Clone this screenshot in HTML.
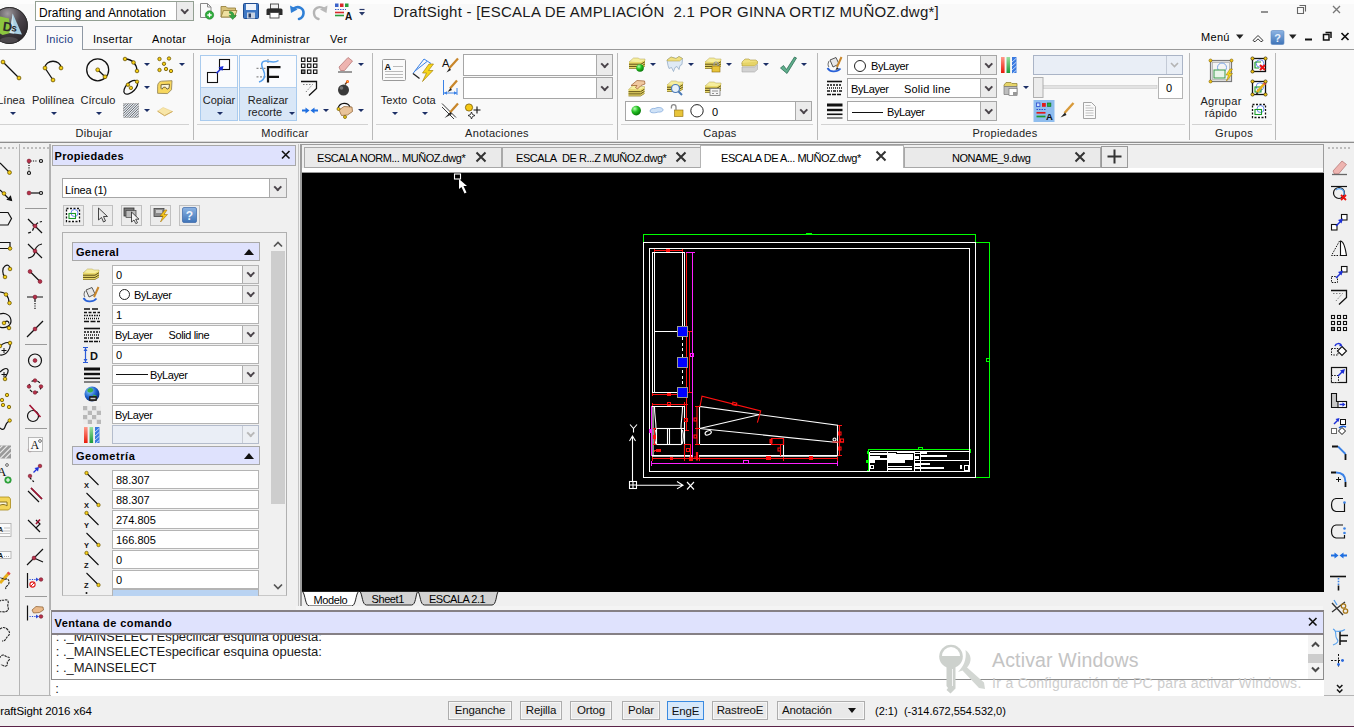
<!DOCTYPE html>
<html><head><meta charset="utf-8"><title>DraftSight</title>
<style>
*{box-sizing:border-box;margin:0;padding:0}
html,body{width:1354px;height:727px;overflow:hidden}
body{position:relative;background:#f4f4f4;font-family:"Liberation Sans",sans-serif;font-size:12px;color:#000}
.a{position:absolute}
.t{position:absolute;white-space:nowrap;line-height:1}
svg{position:absolute;overflow:visible}
.combo{position:absolute;background:#fff;border:1px solid #a6a6a6}
.combo .dd{position:absolute;right:0;top:0;bottom:0;width:16px;background:#ebebeb;border-left:1px solid #aaa}
.combo .dd:after{content:"";position:absolute;left:50%;top:50%;margin-left:-2.750px;margin-top:-4.500px;width:3.500px;height:3.500px;border-right:2px solid #4a444a;border-bottom:2px solid #4a444a;transform:rotate(45deg)}
.vsep{position:absolute;width:1px;background:#b9b9b9}
.hsep{position:absolute;height:1px;background:#d2d2d2}
.gl{position:absolute;font-size:11px;line-height:1;white-space:nowrap;letter-spacing:.3px;color:#222;transform:translateX(-50%)}
.tri{position:absolute;width:0;height:0;margin-top:-.5px;border-left:3px solid transparent;border-right:3px solid transparent;border-top:3.400px solid #1c2f66}
.mt{font-size:11px;letter-spacing:.3px}
.rl{position:absolute;font-size:11px;line-height:1;white-space:nowrap;letter-spacing:0;color:#222;transform:translateX(-50%)}
.f{position:absolute;left:112px;width:147px;height:19px;background:#fff;border:1px solid #b4b4b4;font-size:11px;line-height:19px;padding-left:3px;white-space:nowrap}
.f .dd,.fc .dd{position:absolute;right:0;top:0;bottom:0;width:16px;background:#ebebeb;border-left:1px solid #aaa}
.f .dd:after{content:"";position:absolute;left:50%;top:50%;margin-left:-2.750px;margin-top:-4.500px;width:3.500px;height:3.500px;border-right:2px solid #4a444a;border-bottom:2px solid #4a444a;transform:rotate(45deg)}
.sb{position:absolute;top:701px;height:19px;border:1px solid #adadad;background:#e9e9e9;box-shadow:inset 0 0 0 1px #f6f6f6;font-size:11.500px;line-height:17px;text-align:center;letter-spacing:-.15px;color:#111}
.dtab{position:absolute;top:147px;height:21px;background:#eaeaea;border:1px solid #a8a8a8;font-size:11px}
.dtab .t{top:5px;font-size:11px;letter-spacing:-.45px}
.ls{letter-spacing:-.4px}
.f .dis:after{border-color:#b8b8b8}
.cl{font-size:13px;letter-spacing:-.03px;color:#1a1a1a}
.pb{top:205px;width:21px;height:21px;border:1px solid #c0c0c0;background:#ececec}
.ph{left:72px;width:188px;height:19px;background:#dfe2fd;border:1px solid #a8a8a8}
.ph i{position:absolute;right:5px;top:6px;width:0;height:0;border-left:5px solid transparent;border-right:5px solid transparent;border-bottom:6px solid #111}
</style></head><body>
<!-- ===== TITLE BAR ===== -->
<div class="a" style="left:0;top:0;width:1354px;height:50px;background:#f9f9f9"></div>
<div class="a" style="left:0;top:0;width:1354px;height:4px;background:#fdfdfd"></div>
<!-- logo -->
<svg style="left:0;top:0" width="30" height="46" viewBox="0 0 30 46">
 <defs><radialGradient id="lg" cx="45%" cy="18%" r="80%"><stop offset="0" stop-color="#a09ca0"/><stop offset=".45" stop-color="#4a444a"/><stop offset="1" stop-color="#2a262a"/></radialGradient></defs>
 <circle cx="9.400" cy="25.500" r="18.500" fill="url(#lg)"/>
 <circle cx="9.400" cy="25.500" r="18" fill="none" stroke="#2a2a2a" stroke-width="1"/>
 <path d="M-1 16.300l10 2.300 1.300 14.400-7.600 2-3.700-2z" fill="#8cc63f"/>
 <path d="M12.700 13.400l-3.100 19.600 12.400 1.400z" fill="#a9cfe2"/>
 <path d="M12.700 13.400l-3.100 19.600 4.500 .5z" fill="#cfe4ee"/>
 <text x="3" y="31" font-family="Liberation Sans,sans-serif" font-weight="bold" font-size="13" fill="#2b2b2b" transform="rotate(8 6 26)">D</text>
 <text x="11.500" y="31.500" font-family="Liberation Sans,sans-serif" font-weight="bold" font-size="10" fill="#2b2b2b" transform="rotate(8 14 28)">s</text>
 <ellipse cx="9" cy="40" rx="9" ry="3" fill="#6a666a" opacity=".5"/>
</svg>
<!-- workspace combo -->
<div class="combo" style="left:35px;top:1px;width:159px;height:20px;border-color:#93a093"><span class="t" style="left:3px;top:4.500px;font-size:12px;letter-spacing:.07px">Drafting and Annotation</span><div class="dd" style="width:17px"></div></div>
<!-- quick access icons -->
<svg style="left:199px;top:2px" width="170" height="20" viewBox="0 0 170 20">
 <!-- new -->
 <path d="M1.5 1.5h7l3.5 3.5v10.500h-10.500z" fill="#fafafa" stroke="#8a8a8a"/>
 <path d="M8.5 1.500v3.500h3.500" fill="none" stroke="#8a8a8a"/>
 <circle cx="10.500" cy="13" r="4.200" fill="#2fae3c" stroke="#1c7d29" stroke-width=".6"/>
 <path d="M8.300 13h4.400M10.500 10.800v4.400" stroke="#fff" stroke-width="1.300"/>
 <!-- open -->
 <path d="M22 4.500h5l1.500 1.500h8v9h-14.500z" fill="#d8c27a" stroke="#8f7a35" stroke-width=".8"/>
 <path d="M22 15l2.500-6.500h13.500l-2.500 6.500z" fill="#efe0a0" stroke="#8f7a35" stroke-width=".8"/>
 <path d="M30.500 9.500c3 0 4.500 1.500 4.500 4h2.300l-3.600 4-3.600-4h2.300c0-1.500-.7-2.300-1.900-2.300z" fill="#35a545" stroke="#1c7d29" stroke-width=".5"/>
 <!-- save -->
 <rect x="44.500" y="1.500" width="15" height="15" rx="1" fill="#3f78c4" stroke="#1f4b8e"/>
 <rect x="47" y="2" width="10" height="6" fill="#eef3fb"/>
 <rect x="48" y="10.500" width="8" height="6" fill="#c9d3e2"/>
 <rect x="49.500" y="11.500" width="2.500" height="4" fill="#2b3f66"/>
 <!-- print -->
 <rect x="71.500" y="2" width="8" height="5" fill="#f4f4f4" stroke="#444" stroke-width=".9"/>
 <path d="M69 6.500h13a1.500 1.500 0 0 1 1.500 1.500v5h-16v-5a1.500 1.500 0 0 1 1.500-1.500z" fill="#2b2b2b"/>
 <rect x="71" y="10.500" width="9" height="5.500" fill="#fff" stroke="#444" stroke-width=".9"/>
 <!-- undo -->
 <path d="M94.500 6.500c5-3 10.500-.5 10 5-.3 3-2 4.800-4.500 5.500" fill="none" stroke="#2f7fd6" stroke-width="2.600" stroke-linecap="round"/>
 <path d="M91 3.500l1 7.500 6.500-3.500z" fill="#2f7fd6"/>
 <!-- redo -->
 <path d="M125 6.500c-5-3-10.500-.5-10 5 .3 3 2 4.800 4.500 5.500" fill="none" stroke="#b4b4b4" stroke-width="2.400" stroke-linecap="round"/>
 <path d="M128.500 3.500l-1 7.500-6.500-3.500z" fill="#b9b9b9"/>
 <!-- options -->
 <rect x="136" y="1.500" width="3.500" height="3.500" fill="#3a62c9"/><rect x="141" y="1.500" width="3.500" height="3.500" fill="#d82a2a"/><rect x="146" y="1.500" width="3.500" height="3.500" fill="#2a9d3a"/>
 <path d="M136 7.500h11" stroke="#3a62c9" stroke-width="1.200" stroke-dasharray="1.500 1"/>
 <path d="M136 10.500h9" stroke="#d82a2a" stroke-width="1.600"/>
 <path d="M136 13.500h9" stroke="#2a9d3a" stroke-width="1.600"/>
 <text x="146" y="17.500" font-family="Liberation Sans,sans-serif" font-weight="bold" font-size="10" fill="#111">A</text>
 <!-- customize arrow -->
 <path d="M160.500 7.500h5" stroke="#2a3a6a" stroke-width="1.200"/><path d="M160 10h6l-3 3.500z" fill="#2a3a6a"/>
</svg>
<div class="t" id="title" style="left:393px;top:3.600px;font-size:15px;letter-spacing:.24px;color:#1a1a1a">DraftSight - [ESCALA DE AMPLIACIÓN&nbsp; 2.1 POR GINNA ORTIZ MUÑOZ.dwg*]</div>
<!-- window controls -->
<svg style="left:1255px;top:0" width="99" height="20" viewBox="0 0 99 20">
 <path d="M6 12h7" stroke="#777" stroke-width="1.600"/>
 <path d="M44.500 5.500h6v6M42.500 7.500h6v6h-6z" fill="none" stroke="#666" stroke-width="1.100"/>
 <path d="M78 6l7 7M85 6l-7 7" stroke="#777" stroke-width="1.300"/>
</svg>

<!-- ===== MENU TABS ===== -->
<div class="a" style="left:0;top:49px;width:1354px;height:1px;background:#9a9a9a"></div>
<div class="a" style="left:35px;top:26px;width:48px;height:24px;background:#fafafa;border:1px solid #8e98a4;border-bottom:none"></div>
<div class="t mt" style="left:46px;top:34px;color:#1b3a82">Inicio</div>
<div class="t mt" style="left:93px;top:34px">Insertar</div>
<div class="t mt" style="left:152px;top:34px">Anotar</div>
<div class="t mt" style="left:207px;top:34px">Hoja</div>
<div class="t mt" style="left:251px;top:34px">Administrar</div>
<div class="t mt" style="left:330px;top:34px">Ver</div>
<div class="t mt" style="left:1201px;top:32px">Menú</div>
<svg style="left:1234px;top:28px" width="120" height="20" viewBox="0 0 120 20">
 <path d="M2 6.500h7.500l-3.750 4.500z" fill="#222"/>
 <path d="M19 12.500l5-5 5 5-2 1.300-3-3-3 3z" fill="#fff" stroke="#333" stroke-width="1"/>
 <defs><linearGradient id="hq" x1="0" y1="0" x2="0" y2="1"><stop offset="0" stop-color="#8db4e3"/><stop offset="1" stop-color="#3f74b8"/></linearGradient></defs>
 <rect x="37" y="2.500" width="13" height="14" rx="1.500" fill="url(#hq)" stroke="#5a86c0" stroke-width=".6"/>
 <text x="43.500" y="13.500" text-anchor="middle" font-family="Liberation Sans,sans-serif" font-weight="bold" font-size="11" fill="#e8f0fb">?</text>
 <path d="M55 6.500h7.500l-3.750 4.500z" fill="#222"/>
 <path d="M71 11.500h7" stroke="#111" stroke-width="2"/>
 <path d="M91.500 4.500h5.500v5.500M89.500 6.500h5.500v5.500h-5.500z" fill="none" stroke="#111" stroke-width="1.500"/>
 <path d="M107.500 5l7 7M114.500 5l-7 7" stroke="#111" stroke-width="1.700"/>
</svg>
<!-- ===== RIBBON ===== -->
<div id="ribbon" class="a" style="left:0;top:50px;width:1354px;height:91px;background:#f9f9f9"></div>
<div class="a" style="left:0;top:141px;width:1354px;height:1px;background:#d8d8d8"></div><div class="a" style="left:0;top:142px;width:1354px;height:1px;background:#8e8e8e"></div>
<!-- group separators -->
<div class="vsep" style="left:193px;top:53px;height:87px"></div>
<div class="vsep" style="left:372px;top:53px;height:87px"></div>
<div class="vsep" style="left:617px;top:53px;height:87px"></div>
<div class="vsep" style="left:817px;top:53px;height:87px"></div>
<div class="vsep" style="left:1189px;top:53px;height:87px"></div>
<div class="vsep" style="left:1275px;top:53px;height:87px"></div>
<div class="hsep" style="left:0;top:124px;width:189px"></div>
<div class="hsep" style="left:197px;top:124px;width:171px"></div>
<div class="hsep" style="left:376px;top:124px;width:237px"></div>
<div class="hsep" style="left:621px;top:124px;width:192px"></div>
<div class="hsep" style="left:821px;top:124px;width:364px"></div>
<div class="hsep" style="left:1192px;top:124px;width:80px"></div>
<div class="gl" style="left:94px;top:128px">Dibujar</div>
<div class="gl" style="left:285px;top:128px">Modificar</div>
<div class="gl" style="left:497px;top:128px">Anotaciones</div>
<div class="gl" style="left:720px;top:128px">Capas</div>
<div class="gl" style="left:1005px;top:128px">Propiedades</div>
<div class="gl" style="left:1234px;top:128px">Grupos</div>

<!-- == Dibujar == -->
<svg style="left:0;top:50px" width="193" height="74" viewBox="0 50 193 74">
 <g stroke="#111" stroke-width="1.300" fill="none">
  <path d="M3 62l16 16"/>
  <path d="M45 68c0-9 16-9 16 0M45 68l8 12"/>
  <circle cx="97.700" cy="69.800" r="11"/><path d="M97.700 69.800l7.300 7"/>
  <path d="M125 59c8 0 12 6 12 12"/>
  <ellipse cx="130.800" cy="87.300" rx="8.600" ry="4.600" transform="rotate(-45 130.800 87.300)"/>
 </g>
 <g fill="#f5cf16" stroke="#6b5400" stroke-width=".8">
  <circle cx="3" cy="62" r="1.900"/><circle cx="19" cy="78" r="1.900"/>
  <circle cx="45" cy="68" r="1.900"/><circle cx="61" cy="68" r="1.900"/><circle cx="53" cy="80" r="1.900"/>
  <circle cx="97.700" cy="69.800" r="1.900"/><circle cx="105" cy="76.800" r="1.900"/>
  <circle cx="125" cy="59" r="1.800"/><circle cx="133.500" cy="62.500" r="1.800"/><circle cx="137" cy="71" r="1.800"/>
  <circle cx="159.500" cy="59" r="1.700"/><circle cx="169" cy="58.500" r="1.700"/><circle cx="164" cy="63.800" r="1.700"/><circle cx="159.500" cy="70" r="1.700"/><circle cx="166" cy="69" r="1.700"/><circle cx="171" cy="71" r="1.700"/>
  <circle cx="127.900" cy="84.700" r="1.700"/><circle cx="130.900" cy="87.900" r="1.700"/><circle cx="137" cy="81.700" r="1.700"/>
 </g>
 <!-- boundary -->
 <path d="M157.600 93.300v-7.100c0-3 2-5 4-5l10.400-.5-.5 9-3.900 3.900z" fill="#f7d75e" stroke="#9a8a5a" stroke-width=".9"/>
 <path d="M161.100 84.700l8.400-.5-.5 4-2 1-1.500-2h-2l-1.500 2-1-1z" fill="#fbf6e0" stroke="#6a5a2a" stroke-width=".9"/>
 <!-- hatch -->
 <rect x="123.500" y="103.500" width="15" height="14" fill="#dfe6ee" stroke="#aaa" stroke-width=".5"/>
 <path d="M123.500 106l2.500-2.500M123.500 108.500l5-5M123.500 111l7.500-7.500M123.500 113.500l10-10M123.500 116l12.500-12.500M124.500 117.500l14-14M127 117.500l11.500-11.500M129.500 117.500l9-9M132 117.500l6.500-6.500M134.500 117.500l4-4M137 117.500l1.500-1.500" stroke="#555" stroke-width=".8"/>
 <!-- rhomb -->
 <path d="M157.600 111.200l5.500-3.700 9.400 4-7.900 4.200z" fill="#f8e6a8" stroke="#e6cc88" stroke-width=".6"/><path d="M157.600 111.200l7 4.500 7.900-4.200" fill="none" stroke="#d0ac60" stroke-width="1"/>
</svg>
<div class="rl" style="left:11px;top:95px">Línea</div><div class="tri" style="left:9.500px;top:112px"></div>
<div class="rl" style="left:53px;top:95px">Polilínea</div><div class="tri" style="left:50.500px;top:112px"></div>
<div class="rl" style="left:98px;top:95px">Círculo</div><div class="tri" style="left:95.500px;top:112px"></div>
<div class="tri" style="left:144px;top:63px"></div><div class="tri" style="left:179px;top:63px"></div>
<div class="tri" style="left:144px;top:86px"></div><div class="tri" style="left:144px;top:109px"></div>

<!-- == Modificar == -->
<div class="a" style="left:200px;top:55px;width:38px;height:66px;background:#fafbfd;border:1px solid #a9cbee"></div>
<div class="a" style="left:201px;top:87px;width:36px;height:33px;background:#d9e7f7;border-top:1px solid #b4d0ee"></div>
<div class="a" style="left:239px;top:55px;width:58px;height:66px;background:#fafbfd;border:1px solid #a9cbee"></div>
<div class="a" style="left:240px;top:87px;width:56px;height:33px;background:#d9e7f7;border-top:1px solid #b4d0ee"></div>
<svg style="left:197px;top:50px" width="175" height="74" viewBox="197 50 175 74">
 <!-- copiar -->
 <rect x="219.500" y="59.500" width="10" height="10" fill="#fff" stroke="#111" stroke-width="1.100"/>
 <rect x="207.500" y="72.500" width="10" height="10" fill="#fff" stroke="#111" stroke-width="1.100"/>
 <path d="M216.500 73.200l4.500-4.500" stroke="#1c2fd8" stroke-width="1.600"/><path d="M223.500 66l-5 1.200 3.800 3.800z" fill="#1c2fd8"/>
 <!-- recorte F -->
 <path d="M268 66v16.500M267 67.200h13.500M267 76.800h12" stroke="#111" stroke-width="2.200" fill="none"/>
 <path d="M256.500 68.300h10M256.500 76.800h10" stroke="#8a8a8a" stroke-width="1.200" stroke-dasharray="2 1.500" fill="none"/>
 <path d="M268 59v4" stroke="#8a8a8a" stroke-width="1.200" stroke-dasharray="1.500 1" fill="none"/>
 <path d="M278.500 60.500c-4 3-8 1-12 .5-4-.5-5.500 2-4.500 5.500 1 4 3.500 6 2.500 10-.6 2.500-2.500 4.500-5.500 5.500" stroke="#55a0ee" stroke-width="1.500" fill="none"/>
 <!-- pattern -->
 <g fill="#fff" stroke="#111" stroke-width="1.100"><rect x="301.500" y="58" width="3.400" height="3.400"/><rect x="307.500" y="58" width="3.400" height="3.400"/><rect x="313.500" y="58" width="3.400" height="3.400"/><rect x="301.500" y="64" width="3.400" height="3.400"/><rect x="307.500" y="64" width="3.400" height="3.400"/><rect x="313.500" y="64" width="3.400" height="3.400"/><rect x="301.500" y="70" width="3.400" height="3.400" fill="#888"/><rect x="307.500" y="70" width="3.400" height="3.400"/><rect x="313.500" y="70" width="3.400" height="3.400"/></g>
 <!-- chamfer -->
 <path d="M301 81.500h15.500v7l-7.500 7" fill="none" stroke="#111" stroke-width="1.300"/>
 <path d="M303 84.500h9.500l-7 8" fill="none" stroke="#666" stroke-width=".8" stroke-dasharray="1.500 1.500"/>
 <!-- arrows in -->
 <path d="M302 110.500h5M318 110.500h-5" stroke="#1f6fe0" stroke-width="1.800"/><path d="M309.500 110.500l-4-3v6zM310.500 110.500l4-3v6z" fill="#1f6fe0"/>
 <!-- eraser -->
 <path d="M339 67l9-9.500 4.500 3.500-8 9.500h-4z" fill="#eeb4b0" stroke="#b87a78" stroke-width=".8"/>
 <path d="M338 72h14" stroke="#666" stroke-width="1.300"/>
 <!-- bomb -->
 <circle cx="343.500" cy="90" r="5.500" fill="#3a3a3a"/><circle cx="341.500" cy="88" r="1.800" fill="#777"/>
 <path d="M345 84.500l2-2.500" stroke="#5a3a1a" stroke-width="1.300"/><circle cx="347.500" cy="81.500" r="1.500" fill="#f04a1a"/><circle cx="347.500" cy="81.500" r=".7" fill="#ffd21a"/>
 <!-- hand w/ curve -->
 <path d="M338 108c2-6 10-6 12-1" fill="none" stroke="#111" stroke-width="1.100"/>
 <path d="M339 110l5-3.500 8 .5 .5 4.500-5 3.500-6 .5z" fill="#e9c39a" stroke="#8a5a2a" stroke-width=".7"/>
 <g fill="#f5cf16" stroke="#6b5400" stroke-width=".7"><circle cx="338.500" cy="109" r="1.500"/><circle cx="345" cy="117" r="1.500"/></g>
</svg>
<div class="rl" style="left:219px;top:95px">Copiar</div><div class="tri" style="left:216.500px;top:112px"></div>
<div class="rl" style="left:268px;top:95px">Realizar</div>
<div class="rl" style="left:265px;top:107px">recorte</div><div class="tri" style="left:288.500px;top:112px"></div>
<div class="tri" style="left:322.500px;top:109px"></div>
<div class="tri" style="left:357.500px;top:63px"></div><div class="tri" style="left:357.500px;top:109px"></div>

<!-- == Anotaciones == -->
<svg style="left:376px;top:50px" width="240" height="74" viewBox="376 50 240 74">
 <!-- texto -->
 <rect x="382.500" y="59.500" width="23" height="21" rx="1" fill="#fafafa" stroke="#9a9a9a"/>
 <text x="384.500" y="69.500" font-family="Liberation Sans,sans-serif" font-weight="bold" font-size="9" fill="#111">A</text>
 <path d="M393 66.500h10M385 71.500h18M385 74.500h18M385 77.500h18" stroke="#aaa" stroke-width=".8"/>
 <!-- cota -->
 <path d="M413 73.500l11-14.500 7 4.500" fill="none" stroke="#3b82e6" stroke-width="1"/>
 <path d="M415 71l12-9.500" stroke="#3b82e6" stroke-width="1"/>
 <path d="M413 73.500l6.500 5" stroke="#222" stroke-width="1.300"/>
 <path d="M429 64l-6.500 9h4l-4 8.500 10.500-11h-4.500l5-6.500z" fill="#f7d61a" stroke="#a8840a" stroke-width=".7"/>
 <!-- A brush -->
 <text x="442" y="67" font-family="Liberation Sans,sans-serif" font-size="11" fill="#111">A</text>
 <path d="M458 58.500l-9 10" stroke="#c8862a" stroke-width="2.200"/><path d="M449.500 68l-3 4.500 4.500-2.500z" fill="#222"/>
 <!-- dim brush -->
 <path d="M443.500 80v15M457 88v7M444 93h13" stroke="#3b82e6" stroke-width="1" fill="none"/>
 <path d="M444 93l3-1.800v3.600zM457 93l-3-1.800v3.600z" fill="#3b82e6"/>
 <path d="M457 80.500l-7 8" stroke="#c8862a" stroke-width="2.200"/><path d="M450.500 88l-3 4 4.500-2z" fill="#222"/>
 <!-- leader brush -->
 <path d="M442 103.500l14 14M442 107l12 12" stroke="#222" stroke-width=".9"/>
 <path d="M458 103.500l-8 9" stroke="#c8862a" stroke-width="2.200"/><path d="M450.500 112l-6 6 7.500-4z" fill="#222"/>
 <!-- geom tol -->
 <circle cx="469" cy="107.500" r="3.600" fill="#f5c814" stroke="#7a5c00" stroke-width=".8"/>
 <path d="M473.500 110h7M477 106.500v7" stroke="#111" stroke-width="1.100"/>
 <path d="M471.500 112l1 2.500 2.500 1-2.500 1-1 2.500-1-2.500-2.500-1 2.500-1z" fill="#fff" stroke="#111" stroke-width=".8"/>
</svg>
<div class="rl" style="left:394px;top:95px">Texto</div><div class="tri" style="left:391.500px;top:112px"></div>
<div class="rl" style="left:424px;top:95px">Cota</div><div class="tri" style="left:421.500px;top:112px"></div>
<div class="combo" style="left:463px;top:54px;width:150px;height:22px"><div class="dd"></div></div>
<div class="combo" style="left:463px;top:77px;width:150px;height:22px"><div class="dd"></div></div>
<!-- == Capas == -->
<svg style="left:621px;top:50px" width="196" height="74" viewBox="621 50 196 74">
 <defs>
  <g id="lay3"><path d="M0 5l4.500-4h5l1 1h5.500v1.500l-4 2.500z" fill="#f6ee9e" stroke="#b0a050" stroke-width=".5"/><path d="M0 5v6.500h12l4-2.500v-6l-4 2z" fill="#ead96a"/><path d="M0 7.200h12l4-2.500M0 9.400h12l4-2.500" stroke="#5a4c14" stroke-width="1" fill="none"/><path d="M0 11.500h12l4-2.500" stroke="#8a7a2a" stroke-width=".8" fill="none"/></g>
  <radialGradient id="gb" cx="35%" cy="30%" r="70%"><stop offset="0" stop-color="#b8ffb0"/><stop offset=".5" stop-color="#22c022"/><stop offset="1" stop-color="#0a7a0a"/></radialGradient>
 </defs>
 <!-- row1 -->
 <use href="#lay3" x="629" y="57"/><circle cx="640" cy="68" r="3.800" fill="url(#gb)"/>
 <path d="M667 60l4-3 5 1.500 3-2 3.500 2-.5 6-2 1-1 4-2-3-2 1-1.500 4-2-4-2.500 1-1-3z" fill="#dfeaf5" stroke="#8aa4c0" stroke-width=".7"/><path d="M667 60l4-3 5 1.500 3-2 3.500 2-3 2.500h-12z" fill="#f0e080" stroke="#a8963a" stroke-width=".5"/>
 <use href="#lay3" x="705" y="57"/><rect x="712" y="66" width="8" height="6" fill="#e8c43a" stroke="#8a6a0a" stroke-width=".6"/><path d="M714 66v-2a2 2 0 0 1 4 0v2" fill="none" stroke="#999" stroke-width="1.200"/>
 <path d="M742 62l3-3h4l1 1h6l1.500 1.500-3 2.500h-12.500z" fill="#f0e080" stroke="#a8963a" stroke-width=".6"/><path d="M742 63v3h12.500l3-2.500v-2" fill="#e6d468" stroke="#a8963a" stroke-width=".6"/><path d="M742 67v5h12.500l3-2.500v-5l-3 2.500z" fill="#d2d2d2" stroke="#aaa" stroke-width=".6"/>
 <path d="M780.500 68l3-2.500 3 4 8-12.500 2 1-9.500 15.500z" fill="#5fae8c" stroke="#2f6f55" stroke-width=".8"/>
 <!-- row2 -->
 <use href="#lay3" x="628.500" y="84.500"/><path d="M631 85.500l6-5 7.500.5.500 3-4 1.500-3.500 3.500-2-1.500 1.500-2z" fill="#f0c8a0" stroke="#9a5a2a" stroke-width=".7"/>
 <use href="#lay3" x="667" y="80"/><circle cx="675.500" cy="88.500" r="4" fill="#e6f0fa" stroke="#4a7ab8" stroke-width="1.200"/><path d="M678.500 91.500l3.500 3.500" stroke="#4a7ab8" stroke-width="2"/>
 <use href="#lay3" x="705" y="81"/><rect x="710" y="88.500" width="10" height="7" fill="#f4f4f4" stroke="#777" stroke-width=".8"/><path d="M712 91h6M712 93.500h2M716 93.500h2" stroke="#777" stroke-width=".8"/>
 <!-- combo content -->
</svg>
<div class="tri" style="left:650px;top:63px"></div><div class="tri" style="left:688px;top:63px"></div><div class="tri" style="left:726px;top:63px"></div><div class="tri" style="left:763px;top:63px"></div><div class="tri" style="left:801px;top:63px"></div>
<div class="combo" style="left:625px;top:101px;width:187px;height:20px"><div class="dd"></div>
 <svg style="left:0;top:0" width="100" height="18" viewBox="626 102 100 18">
  <circle cx="636.200" cy="110.600" r="4.800" fill="url(#gb)"/>
  <path d="M650 111c0-2 3-3 5-2.500 2-1.500 7-1.500 8 1 .5 2-3 3-5 2.500-2 1-8 1.500-8-1z" fill="#cfe2f7" stroke="#7aa4d8" stroke-width=".7"/>
  <rect x="674.500" y="110" width="8.500" height="6.500" fill="#e8c43a" stroke="#8a6a0a" stroke-width=".6"/><path d="M676 110v-3a2.300 2.300 0 0 0-4.600 0v1.500" fill="none" stroke="#8a8a8a" stroke-width="1.300"/>
  <circle cx="697" cy="110.800" r="6.200" fill="#fff" stroke="#222" stroke-width="1"/>
 </svg>
 <span class="t" style="left:86px;top:5px;font-size:11px">0</span>
</div>

<!-- == Propiedades == -->
<svg style="left:821px;top:50px" width="368" height="74" viewBox="821 50 368 74">
 <!-- paint bucket -->
 <path d="M830 60l6-2.500 3 6.500-6 3z" fill="#e6e6e6" stroke="#444" stroke-width=".9"/><path d="M829 61c-1.500 3-1 5 0 6" stroke="#444" fill="none" stroke-width=".8"/>
 <path d="M841.500 57l-4.500 10" stroke="#c8862a" stroke-width="2"/><path d="M827.500 68c2 4 9 5 13 .5" stroke="#2a62d8" stroke-width="1.800" fill="none"/><path d="M837 67l-1.500 3 3.500-1z" fill="#222"/>
 <!-- linetype icon -->
 <path d="M827 81.500h15" stroke="#111" stroke-width="1.600"/>
 <path d="M827 85h15" stroke="#111" stroke-width="1.300" stroke-dasharray="2 1"/>
 <path d="M827 88h15" stroke="#111" stroke-width="1.300" stroke-dasharray="1 1"/>
 <path d="M827 91h15" stroke="#111" stroke-width="1.300" stroke-dasharray="3 1 1 1"/>
 <path d="M827 94.500h15" stroke="#111" stroke-width="1.600" stroke-dasharray="4 1"/>
 <!-- lineweight icon -->
 <path d="M827 105h15.500" stroke="#111" stroke-width="3"/><path d="M827 110h15.500" stroke="#111" stroke-width="2.400"/><path d="M827 114.300h15.500" stroke="#111" stroke-width="1.600"/><path d="M827 118h15.500" stroke="#111" stroke-width="1"/>
 <!-- color bars -->
 <defs><linearGradient id="cr" x1="0" y1="0" x2="0" y2="1"><stop offset="0" stop-color="#ff9a8a"/><stop offset="1" stop-color="#e81a0a"/></linearGradient><linearGradient id="cg" x1="0" y1="0" x2="0" y2="1"><stop offset="0" stop-color="#9ae0a0"/><stop offset="1" stop-color="#1a9a3a"/></linearGradient></defs>
 <rect x="1001" y="57" width="3.600" height="16" fill="url(#cr)"/><rect x="1006.500" y="57" width="3.600" height="16" fill="url(#cg)"/>
 <rect x="1012" y="57" width="4.500" height="16" fill="#3a7ae0"/><path d="M1012 62l4.500-4M1012 66l4.500-4M1012 70l4.500-4M1012 74l4.500-4" stroke="#cfe0fa" stroke-width=".9"/>
 <!-- layer props icon -->
 <path d="M1004 85l2-2.500h5l1 1h5v3h-13z" fill="#e6d468" stroke="#8a7a2a" stroke-width=".7"/><path d="M1004 86.500h13v8h-13z" fill="#bdbdbd" stroke="#777" stroke-width=".7"/><rect x="1009" y="88.500" width="8" height="7" fill="#fff" stroke="#777" stroke-width=".7"/><rect x="1013" y="92" width="4" height="3.500" fill="#999"/>
 <!-- disabled combo -->
 <rect x="1033.500" y="55.500" width="149" height="19" fill="#e9eef6" stroke="#aab4c6"/><path d="M1166.500 56v18" stroke="#c3cad6"/><path d="M1171 63l3.500 3.500 3.500-3.500" fill="none" stroke="#b4b4b4" stroke-width="1.600"/>
 <!-- slider -->
 <rect x="1043" y="85.500" width="114" height="3" fill="#e2e2e2" stroke="#c8c8c8" stroke-width=".6"/>
 <rect x="1033.500" y="77.500" width="9.500" height="20" fill="#ececec" stroke="#b0b0b0"/>
 <rect x="1158.500" y="77.500" width="24" height="21" fill="#fff" stroke="#b4b4b4"/>
 <!-- options selected -->
 <rect x="1033.500" y="100" width="21" height="22" fill="#8fbdee"/>
 <rect x="1036.500" y="103" width="3.400" height="3.400" fill="#cfe0fa" stroke="#2a4ad0" stroke-width=".8"/><rect x="1042" y="103" width="3.800" height="3.800" fill="#e01a1a"/><rect x="1047.500" y="103" width="3.400" height="3.400" fill="#2ab03a" stroke="#0a6a1a" stroke-width=".6"/>
 <path d="M1036.500 109.500h10" stroke="#2a4ad0" stroke-width="1.200" stroke-dasharray="1.500 1"/><path d="M1036.500 112.800h9" stroke="#e01a1a" stroke-width="1.700"/><path d="M1036.500 116.500h9" stroke="#1a9a2a" stroke-width="1.700"/>
 <text x="1046" y="120" font-family="Liberation Sans,sans-serif" font-weight="bold" font-size="9.500" fill="#111">A</text>
 <!-- brush -->
 <path d="M1073.500 103l-9 10" stroke="#d89a3a" stroke-width="2.400"/><path d="M1065 112.500l-4.500 5 6-2.500z" fill="#222"/>
 <!-- doc -->
 <path d="M1083.500 102.500h8l4 4v12h-12z" fill="#fafafa" stroke="#9a9a9a" stroke-width=".9"/><path d="M1085.500 108h8M1085.500 110.500h8M1085.500 113h8M1085.500 115.500h8M1085.500 105.500h5" stroke="#b4b4b4" stroke-width=".8"/>
</svg>
<div class="tri" style="left:1022.500px;top:86px"></div>
<div class="t" style="left:1166px;top:83px;font-size:11px">0</div>
<div class="combo" style="left:847px;top:55px;width:150px;height:20px"><div class="dd"></div>
 <span class="a" style="left:6px;top:3.500px;width:12px;height:12px;border:1px solid #222;border-radius:50%"></span>
 <span class="t" style="left:23px;top:5px;font-size:11px;letter-spacing:-.4px">ByLayer</span></div>
<div class="combo" style="left:847px;top:78px;width:150px;height:20px"><div class="dd"></div>
 <span class="t" style="left:3px;top:5px;font-size:11px;letter-spacing:-.4px">ByLayer</span><span class="t" style="left:56px;top:5px;font-size:11px;letter-spacing:.2px">Solid line</span></div>
<div class="combo" style="left:847px;top:101px;width:150px;height:20px"><div class="dd"></div>
 <span class="a" style="left:4px;top:10px;width:31px;height:1px;background:#111"></span>
 <span class="t" style="left:39px;top:5px;font-size:11px;letter-spacing:-.4px">ByLayer</span></div>

<!-- == Grupos == -->
<svg style="left:1192px;top:50px" width="84" height="74" viewBox="1192 50 84 74">
 <rect x="1210.500" y="60.500" width="21" height="21" fill="#e6e6e6" stroke="#7a7a7a" stroke-width="1.200"/>
 <rect x="1212.500" y="62.500" width="17" height="17" fill="#f4f4f4" stroke="#aaa" stroke-width=".7"/>
 <circle cx="1222" cy="67.500" r="4.500" fill="none" stroke="#7aa4e6" stroke-width="1"/><rect x="1214" y="70" width="11" height="8" fill="#e8f4e8" stroke="#3a9a4a" stroke-width="1"/>
 <path d="M1230 69l-4 6h2.500l-2 6 6-7.500h-3l3-4.500z" fill="#f7d61a" stroke="#a8840a" stroke-width=".6"/>
 <g fill="#f5c814" stroke="#7a5c00" stroke-width=".6"><circle cx="1210.500" cy="60.500" r="1.500"/><circle cx="1231.500" cy="60.500" r="1.500"/><circle cx="1210.500" cy="81.500" r="1.500"/></g>
 <!-- small 1 -->
 <rect x="1252.500" y="58.500" width="13" height="13" fill="#fff" stroke="#111" stroke-width="1.300"/><circle cx="1260" cy="63.500" r="3.800" fill="none" stroke="#6a8aee" stroke-width="1"/><path d="M1255 62h6M1255 62v6h4" fill="none" stroke="#1a9a2a" stroke-width="1.200"/>
 <path d="M1260 65l5 5M1265 65l-5 5" stroke="#e81010" stroke-width="2"/>
 <g fill="#f5c814" stroke="#3a2c00" stroke-width=".7"><circle cx="1252.500" cy="58.500" r="1.600"/><circle cx="1265.500" cy="58.500" r="1.600"/><circle cx="1252.500" cy="71.500" r="1.600"/></g>
 <!-- small 2 -->
 <rect x="1252.500" y="81.500" width="13" height="13" fill="#fff" stroke="#111" stroke-width="1.300"/><circle cx="1260" cy="86.500" r="3.800" fill="none" stroke="#6a8aee" stroke-width="1"/><rect x="1255" y="87" width="6" height="5" fill="none" stroke="#1a9a2a" stroke-width="1.100"/>
 <path d="M1265 83l-8 9" stroke="#e8b01a" stroke-width="2.600"/><path d="M1257 92l-1.500 2.500 3-1z" fill="#222"/><path d="M1265.500 82.500l-1.500 1.800" stroke="#e05050" stroke-width="2.600"/>
 <g fill="#f5c814" stroke="#3a2c00" stroke-width=".7"><circle cx="1252.500" cy="81.500" r="1.600"/><circle cx="1265.500" cy="81.500" r="1.600"/><circle cx="1252.500" cy="94.500" r="1.600"/><circle cx="1265.500" cy="94.500" r="1.600"/></g>
 <!-- small 3 -->
 <rect x="1252.500" y="104.500" width="13" height="13" fill="#fff" stroke="#111" stroke-width="1.300" stroke-dasharray="2 1.500"/><circle cx="1260.500" cy="109" r="3.500" fill="none" stroke="#6a8aee" stroke-width="1"/><rect x="1255" y="109.500" width="6.500" height="5" fill="none" stroke="#1a9a2a" stroke-width="1.100"/>
</svg>
<div class="rl" style="left:1221px;top:96px;letter-spacing:.3px">Agrupar</div>
<div class="rl" style="left:1221px;top:108px;letter-spacing:.3px">rápido</div>
<!-- ===== WORK AREA BG ===== -->
<div class="a" style="left:0;top:143px;width:1354px;height:555px;background:#f0f0f0"></div>
<!-- doc tab strip frame -->
<div class="a" style="left:300px;top:144px;width:1024px;height:29px;background:#efefef;border:1px solid #9c9c9c;border-left:2px solid #9c9c9c;border-bottom:none"></div>
<div class="dtab" style="left:304px;width:198px"><span class="t" style="left:12px">ESCALA NORM... MUÑOZ.dwg*</span></div>
<div class="dtab" style="left:502px;width:199px"><span class="t" style="left:13px">ESCALA&nbsp; DE R...Z MUÑOZ.dwg*</span></div>
<div class="dtab" style="left:904px;width:197px"><span class="t" style="left:47px">NONAME_9.dwg</span></div>
<div class="dtab" style="left:700px;top:145px;width:204px;height:24px;background:#fff;border-color:#b4b4b4;border-bottom:none"><span class="t" style="left:20px;top:6.500px">ESCALA DE A... MUÑOZ.dwg*</span></div>
<div class="a" style="left:1101px;top:146px;width:27px;height:22px;background:#ececec;border:1px solid #9a9a9a"></div>
<svg style="left:300px;top:143px" width="840" height="30" viewBox="300 143 840 30">
 <g stroke="#333" stroke-width="2" fill="none">
  <path d="M476.500 152.500l9 9M485.500 152.500l-9 9"/>
  <path d="M676.500 152.500l9 9M685.500 152.500l-9 9"/>
  <path d="M876.500 151.500l9 9M885.500 151.500l-9 9"/>
  <path d="M1075.500 152.500l9 9M1084.500 152.500l-9 9"/>
  <path d="M1107.500 156.500h14M1114.500 149.500v14"/>
 </g>
</svg>
<div class="a" style="left:302px;top:168px;width:1021px;height:4px;background:#fff"></div>
<div class="a" style="left:302px;top:172px;width:1021px;height:1px;background:#9a9a9a"></div>
<!-- ===== CANVAS ===== -->
<div id="canvas" class="a" style="left:302px;top:173px;width:1022px;height:418.500px;background:#000"></div>
<div class="a" style="left:300px;top:173px;width:2px;height:433px;background:#9c9c9c"></div>
<svg id="dwg" style="left:303px;top:173px" width="1019" height="419" viewBox="303 173 1019 419" shape-rendering="crispEdges">
 <!-- green frame -->
 <g fill="none" stroke="#00ff00" stroke-width="1">
  <path d="M643.500 242.500v-8h332v8h14v234.500h-20"/>
  <path d="M806 233.500h6"/>
  <rect x="986.500" y="358" width="3" height="3"/>
  <path d="M868.500 471.500v-22h101.500v3"/>
  <rect x="918.500" y="447" width="4" height="2.500"/>
 </g>
 <g fill="#00ff00"><rect x="866.500" y="451" width="2.500" height="2.500"/><rect x="866" y="459.500" width="3" height="3.500"/><rect x="867" y="469.500" width="3" height="2.500"/></g>
 <!-- white frames -->
 <g fill="none" stroke="#fff" stroke-width="1">
  <rect x="643.500" y="242.500" width="332" height="234.500"/>
  <rect x="649.500" y="248.500" width="320" height="223"/>
 </g>
 <!-- tall column -->
 <g fill="none" stroke="#fff" stroke-width="1">
  <path d="M652.500 392.500v-140h32v78"/>
  <path d="M654.500 392.500v-140M682.500 252.500v74"/>
  <path d="M654.500 331.500h23"/>
  <path d="M652.500 392.500h25"/>
  <path d="M682.500 337v50" stroke-dasharray="3 2.500"/>
 </g>
 <!-- red tall -->
 <g fill="none" stroke="#ff1010" stroke-width="1">
  <path d="M654 250.500h29M654 249v3M682.500 249v3"/>
  <rect x="666" y="249" width="3" height="2" fill="#ff1010"/>
  <path d="M686.500 252v152"/>
  <path d="M689.500 331v62M688 331.500h3.500M688 392.500h3.500"/>
  <path d="M652 394.500h26M652 393v3M677.500 393v3"/>
  <rect x="667.500" y="393" width="2.500" height="2.500"/>
  <path d="M652 404.500h36M652 403v3M684.500 402v4"/>
  <rect x="667.500" y="402.500" width="2.500" height="2.500"/>
 </g>
 <!-- magenta -->
 <g fill="none" stroke="#ff20ff" stroke-width="1">
  <path d="M692.500 252.500v204M686 252.500h8.500"/>
  <rect x="690.500" y="353.500" width="2.500" height="3"/>
  <path d="M651.500 406v50"/>
  <rect x="649.500" y="429" width="2" height="3" fill="#ff20ff"/>
  <path d="M651.500 463.500h186.500M651.500 461v5M837.500 459v7"/>
  <rect x="743.500" y="460.500" width="5" height="2.500"/>
 </g>
 <!-- lower-left box (white) -->
 <g fill="none" stroke="#fff" stroke-width="1.100" shape-rendering="auto">
  <path d="M652 406.500h32.500"/>
  <path d="M684.500 406v50"/>
  <path d="M654.500 407c0 8 1.500 14 1.500 21.500M682.500 407c0 8-1.500 14-1.500 21.500"/>
  <path d="M654 428.500h30"/>
  <path d="M656.500 428.500v16M667.500 428.500v16M669.500 428.500v16M681.500 428.500v16"/>
  <path d="M656.500 444.500h25"/>
  <path d="M655.500 430c-1 4-1 10 .5 14M682.500 430c1 4 1 10-.5 14"/>
  <path d="M652 455.800h40.500" stroke-width="1.800"/>
  <path d="M653 455v-49"/>
 </g>
 <g fill="none" stroke="#ff1010" stroke-width="1">
  <path d="M686.500 404v26M685 430.500h4"/>
  <rect x="684.500" y="418.500" width="2.500" height="3"/>
  <path d="M654.500 428v16.500M653 428.500h3M653 444.500h3"/>
  <rect x="653.500" y="435" width="2" height="3"/>
  <rect x="656.500" y="449" width="3.500" height="2.500" fill="#ff1010"/><path d="M654 451.500l2-1.500"/>
  <path d="M683.500 444.500h7M684.500 444v14M690.500 444v14"/>
  <rect x="686.500" y="448" width="2.500" height="3"/>
 </g>
 <!-- big wedge shape (white) -->
 <g fill="none" stroke="#fff" stroke-width="1.100" shape-rendering="auto">
  <path d="M699.500 444.500v-38l138 18.800v30.500"/>
  <path d="M699.500 428.500l138 14"/>
  <path d="M699.500 428.500l60.500-14"/>
  <path d="M699.500 444.500h72"/>
  <path d="M783.500 438.500v17"/>
  <path d="M699 455.800h138.500" stroke-width="1.800"/>
  <ellipse cx="708.200" cy="432.800" rx="3.300" ry="1.900" transform="rotate(-25 708.200 432.800)"/>
  <circle cx="834.500" cy="439.500" r="1.500"/>
 </g>
 <!-- red wedge details -->
 <g fill="none" stroke="#ff1010" stroke-width="1.100" shape-rendering="auto">
  <path d="M700 406.500l2-10.300 58.700 14.800-3.300 11.600"/>
  <rect x="732.500" y="402.500" width="4" height="2.500" transform="rotate(14 734 404)"/>
  <path d="M697 406v38.500M695 406.500h5M695 428.500h5M695 444.500h5"/>
  <rect x="694" y="418" width="2.500" height="3"/><rect x="694" y="435" width="2.500" height="3"/>
  <path d="M771.500 438.500h12v6h-12z"/><rect x="770" y="439.500" width="2" height="3.500" fill="#ff1010"/>
  <path d="M780.500 444.500v11.500M779 444.500h3"/><rect x="778" y="448" width="2.500" height="3"/>
  <path d="M839.500 425v31M838 425.500h4M832.500 442h11.500M838 455.500h4"/>
  <rect x="838.500" y="432" width="2.500" height="3"/><rect x="840.500" y="439" width="3" height="3"/><rect x="838.500" y="447" width="2.500" height="3"/>
  <path d="M697 452v8.500" stroke-width="2.200"/><path d="M694 457h4"/>
 </g>
 <!-- red bottom dim -->
 <g fill="none" stroke="#ff1010">
  <path d="M652 458.500h186" stroke-width="1.800"/>
  <path d="M652.500 456.500v4.500M684.500 456v5M699.500 456.500v4.500M783.500 456.500v4M837.500 456.500v4" stroke-width="1.100"/>
  <rect x="670" y="457" width="2.500" height="2.500" fill="#ff1010"/><rect x="689" y="457" width="3" height="3" fill="#ff1010"/><rect x="766.500" y="456.500" width="4" height="3" fill="#ff1010"/><rect x="809" y="456.500" width="3" height="3" fill="#ff1010"/>
 </g>
 <!-- blue grips -->
 <g fill="#0000ff" stroke="#9a9a9a" stroke-width="1">
  <rect x="677.500" y="326.500" width="10" height="10"/><rect x="677.500" y="357.500" width="10" height="10"/><rect x="677.500" y="387.500" width="10" height="10"/>
 </g>
 <!-- title block -->
 <g fill="none" stroke="#fff" stroke-width="1">
  <path d="M869.500 451.500h100"/>
  <path d="M869.500 451.500v20M887.500 451.500v20M914.500 451.500v20M920.500 451.500v20"/>
  <path d="M914.500 460.500h55M914.500 465.500h6"/>
 </g>
 <g fill="#fff">
  <rect x="887.500" y="454" width="25.500" height="9"/><rect x="870" y="453" width="17" height="1.500"/><rect x="870" y="456" width="10" height="1.500"/><rect x="870" y="458" width="5" height="5"/><rect x="875" y="458" width="12" height="1.500"/>
  <rect x="870" y="465" width="3" height="3" fill="none" stroke="#fff"/>
  <rect x="888" y="452.500" width="8" height="1.500"/><rect x="897" y="452" width="17" height="1"/>
  <rect x="888" y="465.500" width="24" height="1.500"/><rect x="888" y="468" width="24" height="2"/>
  <rect x="915" y="452.500" width="5" height="1.500"/><rect x="915" y="456" width="4" height="3"/><rect x="915" y="463" width="5" height="1.500"/><rect x="915" y="467" width="5" height="1.500"/>
  <rect x="921" y="452" width="6" height="2"/><rect x="921" y="454.500" width="26" height="2"/><rect x="921" y="462.500" width="9" height="2.500"/><rect x="921" y="466.500" width="23" height="2"/>
  <rect x="960" y="465" width="1.500" height="4"/><rect x="964.500" y="465.500" width="4" height="5" fill="none" stroke="#fff"/>
 </g>
 <g fill="#000"><rect x="905" y="459.500" width="8" height="3.500"/><rect x="896" y="453" width="17" height="1.200"/></g>
 <!-- UCS icon -->
 <g fill="none" stroke="#fff" stroke-width="1.100" shape-rendering="auto">
  <rect x="629.500" y="481.500" width="7" height="7"/><path d="M633 481.500v7M629.500 485h7"/>
  <path d="M637 485.200h46M677 481.500l6 3.700-6 3.700"/>
  <path d="M632.500 481.500v-45.500M629.500 441l3-5 3 5"/>
  <path d="M687 482l7 7.500M694 482l-7 7.500"/>
  <path d="M630 424.500l3.500 4 3.500-4M633.500 428.500v4"/>
 </g>
 <!-- cursor -->
 <g shape-rendering="auto"><rect x="454.500" y="174" width="6" height="5" fill="none" stroke="#fff" stroke-width="1.100"/>
 <path d="M459 179v10l2.500-2 3 6.500 2-1-3-6.500h3.500z" fill="#fff"/></g>
</svg>
<!-- sheet tabs -->
<svg style="left:296px;top:591px" width="220" height="20" viewBox="296 591 220 20">
 <path d="M302.500 591.500c3 3 2.500 14.500 7 14.500h42c4.500 0 4-11.500 7-14.500z" fill="#fff" stroke="#222" stroke-width="1"/>
 <path d="M360 591.500c2.500 3 2 13.500 6.500 13.500h45c4.500 0 4-10.500 6.200-13.500z" fill="#d2d2d2" stroke="#222" stroke-width="1"/>
 <path d="M418 591.500c2.500 3 2 13.500 6.500 13.500h67.500c4.500 0 4-10.500 6.200-13.500z" fill="#d2d2d2" stroke="#222" stroke-width="1"/>
</svg>
<div class="t st" style="left:313.500px;top:594.500px;font-size:11px;letter-spacing:-.4px">Modelo</div>
<div class="t st" style="left:371.500px;top:593.700px;font-size:11px;letter-spacing:-.4px">Sheet1</div>
<div class="t st" style="left:429px;top:593.700px;font-size:11px;letter-spacing:-.5px">ESCALA 2.1</div>
<!-- ===== PROPERTIES PANEL ===== -->
<div class="a" style="left:50px;top:144px;width:1px;height:466px;background:#b0b0b0"></div>
<div class="a" style="left:298px;top:144px;width:1px;height:466px;background:#c4c4c4"></div>
<div class="a" style="left:52px;top:145px;width:244px;height:21px;background:#dfe2fd;border:1px solid #a8a8a8"></div>
<div class="t" style="left:54.500px;top:151px;font-size:11px;font-weight:bold;letter-spacing:.3px">Propiedades</div>
<svg style="left:280px;top:149px" width="12" height="12" viewBox="0 0 12 12"><path d="M2 2l7.500 7.500M9.500 2l-7.500 7.500" stroke="#111" stroke-width="1.600"/></svg>
<div class="combo" style="left:62px;top:178px;width:225px;height:20px"><span class="t" style="left:2px;top:5.500px;font-size:11px;letter-spacing:-.25px">Línea (1)</span><div class="dd" style="width:17px"></div></div>
<!-- buttons row -->
<div class="a pb" style="left:63px"></div><div class="a pb" style="left:92px"></div><div class="a pb" style="left:121px"></div><div class="a pb" style="left:150px"></div><div class="a pb" style="left:179px"></div>
<svg style="left:63px;top:205px" width="140" height="21" viewBox="63 205 140 21">
 <rect x="66.500" y="208.500" width="13" height="13" fill="#fff" stroke="#111" stroke-width="1.300" stroke-dasharray="2 1.500"/><circle cx="74.500" cy="213" r="3.500" fill="none" stroke="#6a8aee"/><rect x="69" y="213.500" width="6.500" height="5" fill="none" stroke="#1a9a2a" stroke-width="1.100"/>
 <path d="M98.500 208v12l3-2.500 2 4.500 2-1-2-4.500h4z" fill="#e8e8e8" stroke="#333" stroke-width=".9"/>
 <rect x="124" y="208" width="10" height="8" fill="#777" stroke="#333" stroke-width=".8"/><rect x="126" y="210.500" width="10" height="7" fill="#bbb" stroke="#444" stroke-width=".7"/><path d="M131.500 212v10l2.500-2 1.800 3.600 1.700-.8-1.800-3.600h3.300z" fill="#f4f4f4" stroke="#222" stroke-width=".8"/>
 <rect x="154" y="208.500" width="10" height="8" fill="#8a8a8a" stroke="#444" stroke-width=".8"/><rect x="156" y="210" width="6" height="3" fill="#ccc"/><path d="M165 210l-5 6h3l-2.500 6 7-7.500h-3.500l3-4.500z" fill="#f7c81a" stroke="#a8740a" stroke-width=".6"/>
 <rect x="182.500" y="207.500" width="14" height="15" rx="1.500" fill="url(#hq)" stroke="#3a66a8" stroke-width=".7"/><text x="189.500" y="219.500" text-anchor="middle" font-family="Liberation Sans,sans-serif" font-weight="bold" font-size="12" fill="#eef4fc">?</text>
</svg>
<!-- inner box -->
<div class="a" style="left:62px;top:232px;width:225px;height:364px;border:1px solid #b0b0b0;border-bottom-color:#c8c8c8;background:#f0f0f0"></div>
<!-- scrollbar -->
<div class="a" style="left:271px;top:251px;width:14px;height:253px;background:#cdcdcd"></div>
<svg style="left:271px;top:236px" width="14" height="360" viewBox="0 0 14 360"><path d="M3 10.500l4-4 4 4" fill="none" stroke="#555" stroke-width="1.700"/><path d="M3 348.500l4 4 4-4" fill="none" stroke="#555" stroke-width="1.700"/></svg>
<!-- headers -->
<div class="a ph" style="top:242px"><span class="t" style="left:3px;top:4px;font-size:11px;font-weight:bold;letter-spacing:.3px">General</span><i></i></div>
<div class="a ph" style="top:446px"><span class="t" style="left:3px;top:4px;font-size:11px;font-weight:bold;letter-spacing:.55px">Geometría</span><i></i></div>
<!-- general fields -->
<div class="f" style="top:265px">0<div class="dd"></div></div>
<div class="f" style="top:285px"><span class="a" style="left:6px;top:3px;width:11px;height:11px;border:1px solid #222;border-radius:50%"></span><span class="ls" style="margin-left:18px">ByLayer</span><div class="dd"></div></div>
<div class="f" style="top:305px">1</div>
<div class="f" style="top:325px;padding-left:2px"><span class="ls">ByLayer</span><span class="ls" style="margin-left:16px">Solid line</span><div class="dd"></div></div>
<div class="f" style="top:345px">0</div>
<div class="f" style="top:365px"><span class="a" style="left:3px;top:8px;width:32px;height:1px;background:#111"></span><span class="ls" style="margin-left:34px">ByLayer</span><div class="dd"></div></div>
<div class="f" style="top:385px"></div>
<div class="f" style="top:405px;padding-left:2px"><span class="ls">ByLayer</span></div>
<div class="f" style="top:425px;background:#eaeef6;border-color:#b4bccc"><div class="dd dis" style="background:#eceff4;border-left-color:#c8ccd4"></div></div>
<!-- geometry fields -->
<div class="f" style="top:470px">88.307</div>
<div class="f" style="top:490px">88.307</div>
<div class="f" style="top:510px">274.805</div>
<div class="f" style="top:530px">166.805</div>
<div class="f" style="top:550px">0</div>
<div class="f" style="top:570px">0</div>
<div class="f" style="top:589px;height:7px;background:#b9d3f2;border-bottom:none"></div>
<!-- field icons -->
<svg style="left:80px;top:262px" width="26" height="336" viewBox="80 262 26 336">
 <!-- layers -->
 <use href="#lay3" x="83" y="268"/>
 <!-- paint -->
 <path d="M86 290l6-2.500 3 6.500-6 3z" fill="#e6e6e6" stroke="#444" stroke-width=".9"/><path d="M85 291c-1.500 3-1 5 0 6" stroke="#444" fill="none" stroke-width=".8"/>
 <path d="M98.500 287l-4.500 10" stroke="#c8862a" stroke-width="2"/><path d="M83.500 298c2 4 9 5 13 .5" stroke="#2a62d8" stroke-width="1.800" fill="none"/>
 <!-- scale -->
 <path d="M84 309h16" stroke="#111" stroke-width="1.500" stroke-dasharray="6 2"/><path d="M84 312.500h16" stroke="#111" stroke-width="1.300" stroke-dasharray="3 1.500"/><path d="M84 315.500h16" stroke="#111" stroke-width="1.300" stroke-dasharray="1.500 1"/><path d="M84 318.500h16" stroke="#111" stroke-width="1.300" stroke-dasharray="1 1"/><path d="M84 321.500h16" stroke="#111" stroke-width="1.500" stroke-dasharray="5 1.500"/>
 <!-- linetype -->
 <path d="M84 328.500h16" stroke="#111" stroke-width="1.600"/><path d="M84 332h16" stroke="#111" stroke-width="1.300" stroke-dasharray="2 1"/><path d="M84 335h16" stroke="#111" stroke-width="1.300" stroke-dasharray="1 1"/><path d="M84 338h16" stroke="#111" stroke-width="1.300" stroke-dasharray="3 1 1 1"/><path d="M84 341.500h16" stroke="#111" stroke-width="1.600" stroke-dasharray="4 1"/>
 <!-- thickness -->
 <path d="M85.500 347v16M83 347.500h5M83 362.500h5" stroke="#2a5ad8" stroke-width="1.200"/><path d="M85.500 348l-2 3h4zM85.500 362l-2-3h4z" fill="#2a5ad8"/>
 <text x="90" y="359.500" font-family="Liberation Sans,sans-serif" font-weight="bold" font-size="11" fill="#111">D</text>
 <!-- lineweight -->
 <path d="M84 369h16" stroke="#111" stroke-width="3"/><path d="M84 374h16" stroke="#111" stroke-width="2.400"/><path d="M84 378.300h16" stroke="#111" stroke-width="1.600"/><path d="M84 382h16" stroke="#111" stroke-width="1"/>
 <!-- globe -->
 <defs><radialGradient id="gl" cx="35%" cy="30%" r="75%"><stop offset="0" stop-color="#8ad0ff"/><stop offset=".6" stop-color="#1a5ac8"/><stop offset="1" stop-color="#0a2a6a"/></radialGradient></defs>
 <circle cx="92" cy="394" r="7.500" fill="url(#gl)"/><path d="M88 389c2-1.500 4-1 5 .5s-1 3-3 3-3.500-1.500-2-3.500zM93 395c2-.5 4 .5 3.500 2.500s-2.500 2.500-3.500 1z" fill="#3ab04a"/>
 <rect x="89" y="396" width="8" height="5" rx="1" fill="#222"/><path d="M90.500 398.500h5" stroke="#ccc" stroke-width="1.400"/>
 <!-- checker -->
 <g fill="#b8b8b8"><rect x="83" y="406" width="4.500" height="4.500"/><rect x="92" y="406" width="4.500" height="4.500"/><rect x="87.500" y="410.500" width="4.500" height="4.500"/><rect x="96.500" y="410.500" width="4.500" height="4.500"/><rect x="83" y="415" width="4.500" height="4.500"/><rect x="92" y="415" width="4.500" height="4.500"/><rect x="87.500" y="419.500" width="4.500" height="4.500"/><rect x="96.500" y="419.500" width="4.500" height="4.500"/></g>
 <g fill="#ececec"><rect x="87.500" y="406" width="4.500" height="4.500"/><rect x="96.500" y="406" width="4.500" height="4.500"/><rect x="83" y="410.500" width="4.500" height="4.500"/><rect x="92" y="410.500" width="4.500" height="4.500"/><rect x="87.500" y="415" width="4.500" height="4.500"/><rect x="96.500" y="415" width="4.500" height="4.500"/><rect x="83" y="419.500" width="4.500" height="4.500"/><rect x="92" y="419.500" width="4.500" height="4.500"/></g>
 <!-- color bars -->
 <rect x="84" y="427" width="3.600" height="16" fill="url(#cr)"/><rect x="89.500" y="427" width="3.600" height="16" fill="url(#cg)"/><rect x="95" y="427" width="4.500" height="16" fill="#3a7ae0"/><path d="M95 432l4.500-4M95 436l4.500-4M95 440l4.500-4M95 444l4.500-4" stroke="#cfe0fa" stroke-width=".9"/>
 <!-- geometry icons -->
 <g stroke="#111" stroke-width="1.100"><path d="M86.500 473l12 12M86.500 493l12 12M86.500 513l12 12M86.500 533l12 12M86.500 553l12 12M86.500 573l12 12"/></g>
 <g fill="#f5cf16" stroke="#6b5400" stroke-width=".7"><circle cx="86.500" cy="473" r="1.700"/><circle cx="98.500" cy="505" r="1.700"/><circle cx="86.500" cy="513" r="1.700"/><circle cx="98.500" cy="545" r="1.700"/><circle cx="86.500" cy="553" r="1.700"/><circle cx="98.500" cy="585" r="1.700"/></g>
 <g font-family="Liberation Sans,sans-serif" font-weight="bold" font-size="7.500" fill="#111"><text x="84" y="487.500">X</text><text x="84" y="507.500">X</text><text x="84" y="527.500">Y</text><text x="84" y="547.500">Y</text><text x="84" y="567.500">Z</text><text x="84" y="587.500">Z</text></g>
 <circle cx="86.500" cy="593" r="1" fill="#111"/>
</svg>
<!-- ===== LEFT TOOLBARS ===== -->
<div class="a" style="left:19px;top:144px;width:1px;height:551px;background:#b4b4b4"></div>
<div class="a" style="left:49px;top:144px;width:1px;height:551px;background:#b4b4b4"></div>
<div class="a" style="left:0;top:147px;width:17px;height:2px;background:repeating-linear-gradient(90deg,#bdbdbd 0 2px,transparent 2px 4px)"></div>
<div class="a" style="left:23px;top:147px;width:26px;height:2px;background:repeating-linear-gradient(90deg,#bdbdbd 0 2px,transparent 2px 4px)"></div>
<svg style="left:0;top:143px" width="50" height="555" viewBox="0 143 50 555">
 <g fill="none" stroke="#111" stroke-width="1.200">
  <!-- col 1 -->
  <path d="M0 163l9.500 9.500"/>
  <path d="M0 190l8 8"/><path d="M11.500 200.500l-4-1 3-3z" fill="#111"/>
  <path d="M0 212.500h8l3.500 6-3.500 6.500h-8"/>
  <path d="M0 242.500h10v6h-10"/>
  <path d="M5 277c-3-3-3-9 0-11s5 0 5 3"/>
  <path d="M0 292c5 0 9 4 9 11"/>
  <path d="M0 314c6-2 11 2 11 7s-6 8-11 6"/><path d="M4 323c2-3 5-2 5 .5"/>
  <path d="M0 346c3-3 9-5 10-2s-3 12-10 11"/>
  <path d="M0 372c3-3 7-5 8-2s-3 6-3 9"/>
  <path d="M0 428c2 2 4 2 5-1s1-4 4-6"/>
  <!-- col 2 snap icons -->
  <path d="M30.500 161h6" stroke-dasharray="1.200 1.200"/><path d="M29 162.500v8" stroke-dasharray="1.200 1.200"/><circle cx="41" cy="161" r="1.500" fill="#fff"/><circle cx="29" cy="173" r="1.500" fill="#fff"/>
  <path d="M31 193h8"/><circle cx="41" cy="193" r="1.500" fill="#fff"/>
  <path d="M28 219l14 14"/><path d="M28 233c6-1 6-6 5-8M36 225c1-2 3-3 6-3.500" stroke-dasharray="3 2"/>
  <path d="M28 244l14 14M28 258c7-1 7-6 7-7s1-6 7-7"/>
  <path d="M30 271.500l10 10"/>
  <path d="M27 297h16M35 297v5"/><path d="M35 303v7" stroke-dasharray="1.200 1.200"/>
  <path d="M27 337l16-16"/>
  <circle cx="35" cy="360.500" r="6.500"/>
  <circle cx="35" cy="386.500" r="6" stroke-dasharray="3 3"/>
  <circle cx="33" cy="416" r="5.500"/>
  <path d="M30 478l4 4" stroke-dasharray="2 1.500"/>
  <path d="M28 491l11 11M31 488l11 11" />
  <path d="M28 520l8 8 4-4-4-4"/><path d="M36 528l4 4"/>
  <path d="M43 549l-9 9-7 7M34 558l9 4"/>
  <path d="M27.500 573v15M27.500 605.500v15"/>
 </g>
 <path d="M29.500 405l11 12" stroke="#a01030" stroke-width="1.600"/>
 <path d="M31 488l11 11" stroke="#a01030" stroke-width="1.600"/>
 <path d="M36 524l4-4.500" stroke="#a01030" stroke-width="1.600"/>
 <!-- separators col 2 -->
 <g stroke="#9a9a9a" stroke-width="1"><path d="M25 208.500h22M25 344.500h22M25 428.500h22M25 538.500h22M25 596.500h22"/></g>
 <!-- yellow dots col1 -->
 <g fill="#f5cf16" stroke="#6b5400" stroke-width=".8">
  <circle cx="9.500" cy="172.500" r="1.900"/><circle cx="4" cy="193.500" r="1.800"/><circle cx="10" cy="248.500" r="1.800"/>
  <circle cx="10" cy="269" r="1.800"/><circle cx="5" cy="277" r="1.800"/><circle cx="6" cy="294.500" r="1.800"/><circle cx="9.500" cy="303" r="1.800"/>
  <circle cx="4" cy="323" r="1.800"/><circle cx="9" cy="328" r="1.800"/>
  <circle cx="0" cy="346" r="1.800"/><circle cx="10" cy="343" r="1.800"/><circle cx="5" cy="379" r="1.800"/>
  <circle cx="7" cy="395" r="1.700"/><circle cx="2" cy="400" r="1.700"/><circle cx="3" cy="405" r="1.700"/><circle cx="9" cy="407" r="1.700"/><circle cx="9.700" cy="420.500" r="1.700"/>
 </g>
 <path d="M1.500 350.500h5M4 348v5M1.500 374.500h5M4 372v5" stroke="#111" stroke-width="1"/>
 <!-- red dots col2 -->
 <g fill="#b8304a" stroke="#701828" stroke-width=".6">
  <circle cx="29" cy="161" r="1.900"/><circle cx="29" cy="193" r="1.900"/><circle cx="35" cy="226" r="1.900"/><circle cx="35" cy="251" r="1.900"/>
  <circle cx="30" cy="271.500" r="1.900"/><circle cx="40" cy="281.500" r="1.900"/><circle cx="35" cy="297" r="1.900"/><circle cx="35" cy="329" r="1.900"/>
  <circle cx="35" cy="360.500" r="1.900"/><circle cx="35" cy="380.500" r="1.800"/><circle cx="29" cy="386.500" r="1.800"/><circle cx="41" cy="386.500" r="1.800"/><circle cx="35" cy="392.500" r="1.800"/>
  <circle cx="30" cy="450" r="1.800"/><circle cx="40" cy="466" r="1.800"/><circle cx="30" cy="476" r="1.800"/><circle cx="34" cy="558" r="1.900"/>
  <circle cx="41" cy="579.500" r="1.800"/><circle cx="41" cy="616.500" r="1.800"/>
 </g>
 <path d="M33.500 472.500l4-4" stroke="#1c2fd8" stroke-width="1.300"/><path d="M39 467l-4.500 1 3.500 3.500z" fill="#1c2fd8"/>
 <!-- text snap icon -->
 <rect x="28.500" y="437.500" width="14" height="14" fill="#fafafa" stroke="#aaa" stroke-width=".8"/>
 <text x="30.500" y="449" font-family="Liberation Serif,serif" font-size="12" fill="#111">A</text><circle cx="40" cy="441" r="1.400" fill="none" stroke="#333" stroke-width=".7"/>
 <!-- snap none / hand -->
 <path d="M29.500 579.500h7M29.500 616.500h7" stroke="#2a4ad8" stroke-width="1.100" stroke-dasharray="1.200 1.200"/><path d="M39 579.500l-3-2v4zM39 616.500l-3-2v4z" fill="#2a4ad8"/>
 <circle cx="32.500" cy="584.500" r="2.600" fill="#fff" stroke="#e01a1a" stroke-width="1.100"/><path d="M30.700 586.300l3.600-3.600" stroke="#e01a1a" stroke-width="1"/>
 <path d="M32 610l4-3.500 7 .5 .5 3-4 2.500-6 .5z" fill="#e9b98a" stroke="#8a5a2a" stroke-width=".7"/>
 <!-- col1 lower icons -->
 <rect x="-2" y="445.500" width="13" height="13" fill="#9a9a9a"/><path d="M-2 450l4.500-4.500M-2 455l9.500-9.500M0 458.500l11-11M5 458.500l6-6" stroke="#e8e8e8" stroke-width="1.100"/>
 <text x="-3" y="476" font-family="Liberation Serif,serif" font-size="13" fill="#111">A</text><circle cx="7" cy="465" r="1.400" fill="none" stroke="#333" stroke-width=".7"/>
 <circle cx="8" cy="480" r="3.300" fill="#2fae3c" stroke="#1c7d29" stroke-width=".5"/><path d="M6 480h4M8 478v4" stroke="#fff" stroke-width="1.100"/>
 <path d="M-2 497h11l1.500 2v9l-2 2h-10.500" fill="#f3d558" stroke="#a88a1a" stroke-width=".8"/><path d="M-1 506v-4h8v4c-2-2-6-2-8 0z" fill="#fbf4d8" stroke="#7a6414" stroke-width=".9"/>
 <rect x="-3" y="523.500" width="14" height="13" fill="#fafafa" stroke="#aaa" stroke-width=".8"/><text x="-2" y="532" font-family="Liberation Sans,sans-serif" font-weight="bold" font-size="7" fill="#111">A</text><path d="M4 528h6M-1 531h11M-1 533.500h11" stroke="#aaa" stroke-width=".7"/>
 <rect x="-3" y="551.500" width="14" height="7" fill="#fafafa" stroke="#aaa" stroke-width=".8"/><text x="-2" y="558" font-family="Liberation Sans,sans-serif" font-weight="bold" font-size="7" fill="#111">A</text><path d="M4 556.500h5" stroke="#888" stroke-width=".7" stroke-dasharray="1 1"/>
 <path d="M9 573l-9 10" stroke="#e8b01a" stroke-width="3"/><path d="M9.500 572.500l-1.500 1.800" stroke="#e05050" stroke-width="3"/>
 <g fill="none" stroke="#222" stroke-width="1.100" stroke-dasharray="2.500 .8">
  <path d="M-2 578c4-1 5 2 8 1s4 4 2 6-3 2-2 4"/>
  <path d="M-1 602c2-3 4-1 6-2s4 1 3 4 2 5-1 7-5 0-8 1"/>
  <path d="M0 629c2-2 5-2 7 0s4 4 1 7-2 5-6 5"/>
  <path d="M-1 658c2-1 2-3 4-3s3 2 5 2 2 3 0 4 1 4-2 5-3-2-5-1"/>
 </g>
</svg>

<div class="a" style="left:0;top:695px;width:51px;height:1px;background:#b4b4b4"></div>
<div class="a" style="left:1324px;top:695px;width:30px;height:1px;background:#b4b4b4"></div>
<!-- ===== RIGHT TOOLBAR ===== -->

<div class="a" style="left:1328px;top:147px;width:24px;height:2px;background:repeating-linear-gradient(90deg,#bdbdbd 0 2px,transparent 2px 4px)"></div>
<svg style="left:1324px;top:143px" width="30" height="555" viewBox="1324 143 30 555">
 <!-- eraser -->
 <path d="M1333 171l9-10 4.500 3.500-8 9.500h-4z" fill="#eeb4b0" stroke="#b87a78" stroke-width=".8"/><path d="M1332 174.500h15" stroke="#666" stroke-width="1.300"/>
 <!-- delete dup -->
 <path d="M1331 186.500h16" stroke="#111" stroke-width="1.200"/><circle cx="1339" cy="193" r="5.500" fill="none" stroke="#111" stroke-width="1.200"/><path d="M1336 190c3-3 9-1 8 5" fill="none" stroke="#55a0ee" stroke-width="1.200"/>
 <path d="M1341 195l5 5M1346 195l-5 5" stroke="#e81010" stroke-width="1.800"/>
 <!-- copy -->
 <g fill="#fff" stroke="#111" stroke-width="1.100"><rect x="1341.500" y="214.500" width="5.500" height="5.500"/><rect x="1331.500" y="224.500" width="5.500" height="5.500"/></g>
 <path d="M1336 226l5-5" stroke="#1c2fd8" stroke-width="1.500"/><path d="M1343 218.500l-5 1.500 3.500 3.500z" fill="#1c2fd8"/>
 <!-- mirror -->
 <path d="M1339.500 241l-8 14.500h8" fill="none" stroke="#111" stroke-width="1" stroke-dasharray="1.500 1.200"/><path d="M1340.500 241c3 0 5 8 6 14.500h-6z" fill="#fff" stroke="#111" stroke-width="1.100"/>
 <!-- move -->
 <rect x="1341.500" y="266.500" width="5.500" height="5.500" fill="#fff" stroke="#111" stroke-width="1.100"/><rect x="1331.500" y="276.500" width="6" height="6" fill="none" stroke="#111" stroke-width="1" stroke-dasharray="1.500 1.200"/>
 <path d="M1336 278l5-5" stroke="#1c2fd8" stroke-width="1.500"/><path d="M1343 270.500l-5 1.500 3.500 3.500z" fill="#1c2fd8"/>
 <!-- offset/chamfer -->
 <path d="M1331 290.500h15.500v7l-7.500 7" fill="none" stroke="#111" stroke-width="1.300"/><path d="M1333 293.500h9.500l-7 8" fill="none" stroke="#666" stroke-width=".8" stroke-dasharray="1.500 1.500"/>
 <!-- pattern -->
 <g fill="#fff" stroke="#111" stroke-width="1.100"><rect x="1331.500" y="315.500" width="3" height="3"/><rect x="1337.500" y="315.500" width="3" height="3"/><rect x="1343.500" y="315.500" width="3" height="3"/><rect x="1331.500" y="321.500" width="3" height="3"/><rect x="1337.500" y="321.500" width="3" height="3"/><rect x="1343.500" y="321.500" width="3" height="3"/><rect x="1331.500" y="327.500" width="3" height="3" fill="#888"/><rect x="1337.500" y="327.500" width="3" height="3"/><rect x="1343.500" y="327.500" width="3" height="3"/></g>
 <!-- rotate -->
 <rect x="1331.500" y="348.500" width="6.500" height="6.500" fill="none" stroke="#111" stroke-width="1" stroke-dasharray="1.500 1.200"/><path d="M1342 346.500l4.500 4.500-4.500 4.500-4.500-4.500z" fill="#fff" stroke="#111" stroke-width="1.100"/><path d="M1335 346c1-3 5-3 6-1" fill="none" stroke="#1c2fd8" stroke-width="1.500"/><path d="M1342.500 346.500l-3.500-.5 2-2.500z" fill="#1c2fd8"/>
 <!-- scale -->
 <rect x="1331.500" y="367.500" width="15" height="15" fill="none" stroke="#111" stroke-width="1.200"/><rect x="1331.500" y="375.500" width="7" height="7" fill="#f1f1f1" stroke="#111" stroke-width="1" stroke-dasharray="1.500 1.200"/><path d="M1338 376l5-5" stroke="#1c2fd8" stroke-width="1.500"/><path d="M1345 369l-5 1.500 3.500 3.500z" fill="#1c2fd8"/>
 <!-- stretch -->
 <path d="M1331.500 393.500h5v8h10v6h-15z" fill="#c8c8c8" stroke="#111" stroke-width="1.100"/><rect x="1338" y="401.500" width="8.500" height="6" fill="#fff" stroke="#111" stroke-width="1.100"/><path d="M1339.500 404.500h4" stroke="#1c2fd8" stroke-width="1.500"/><path d="M1345.500 404.500l-3-2.200v4.400z" fill="#1c2fd8"/>
 <!-- quick modify -->
 <g fill="#fff" stroke="#111" stroke-width="1"><rect x="1340.500" y="419.500" width="5" height="5"/><rect x="1331.500" y="428.500" width="5" height="5" stroke="#666"/><path d="M1342 427.500l3.500 3.500-3.500 3.500-3.500-3.500z"/></g>
 <path d="M1334 424l4-4" stroke="#1c2fd8" stroke-width="1.400"/><path d="M1339.500 418l-4 1 3 3z" fill="#1c2fd8"/><path d="M1339 428c2-2 5-2 7-1" fill="none" stroke="#1c5fd8" stroke-width="1.400"/>
 <!-- chamfer -->
 <path d="M1332 446.500h6M1345.500 454v6" stroke="#111" stroke-width="1.800"/><path d="M1338 446.500l7.500 7.500" stroke="#3b82e6" stroke-width="1.800"/>
 <!-- fillet -->
 <path d="M1331 472.500h5M1345.500 482v5" stroke="#111" stroke-width="1.800"/><path d="M1336 472.500c6 0 9.500 3 9.500 9.500" fill="none" stroke="#3b82e6" stroke-width="1.800"/><path d="M1336 479.500h5M1338.500 477v5" stroke="#111" stroke-width="1"/>
 <!-- explode-ish -->
 <path d="M1343 498.500h-7c-6 1-6 12 0 13h8.500v-9" fill="none" stroke="#111" stroke-width="1.200"/><circle cx="1344.500" cy="502.500" r="1.300" fill="#3b82e6"/>
 <path d="M1343 525h-7c-6 1-6 12 0 13h8.500v-3" fill="none" stroke="#111" stroke-width="1.200"/><circle cx="1344.500" cy="528.500" r="1.300" fill="#3b82e6"/><circle cx="1344.500" cy="533" r="1.300" fill="#3b82e6"/>
 <!-- weld -->
 <path d="M1331 555.500h4M1347 555.500h-4" stroke="#1f6fe0" stroke-width="1.800"/><path d="M1338.500 555.500l-4-3v6zM1339.500 555.500l4-3v6z" fill="#1f6fe0"/>
 <!-- extend -->
 <path d="M1330 576.500h16" stroke="#111" stroke-width="1.600"/><path d="M1338.500 578v7" stroke="#3b82e6" stroke-width="1.600" stroke-dasharray="1.500 1.200"/><path d="M1338.500 585.500v5" stroke="#111" stroke-width="1.600"/>
 <!-- scissors -->
 <path d="M1332 603l11 12M1332 612l13-10" stroke="#333" stroke-width="1.300"/><circle cx="1343.500" cy="606" r="2.200" fill="none" stroke="#a8781a" stroke-width="1.300"/><circle cx="1345.500" cy="611" r="2.200" fill="none" stroke="#a8781a" stroke-width="1.300"/><path d="M1334 600l3 5" stroke="#55a0ee" stroke-width="1.300"/>
 <!-- trim F -->
 <path d="M1340 631v14M1340 635.500h8M1340 641h7" stroke="#111" stroke-width="1.500" fill="none"/><path d="M1333 629c5 2 1 7 4 10 2 2 1 4-4 6M1335 631c5 1 8 0 10-1.500" stroke="#55a0ee" stroke-width="1.100" fill="none"/>
 <!-- point -->
 <path d="M1331 660.500h14M1338.500 654v13" stroke="#111" stroke-width="1" stroke-dasharray="2 1.500"/><circle cx="1342.500" cy="660.500" r="1.400" fill="#2a6ae0"/><circle cx="1338.500" cy="664.500" r="1.400" fill="#2a6ae0"/>
 <!-- chevrons -->
 <path d="M1337 685l2.700 2.700 2.700-2.700M1337 689.500l2.700 2.700 2.700-2.700" fill="none" stroke="#111" stroke-width="1.500"/>
</svg>
<!-- ===== COMMAND WINDOW ===== -->
<div class="a" style="left:296px;top:606px;width:1027px;height:5px;background:#f4f4f4"></div>
<div class="a" style="left:51px;top:610px;width:1273px;height:25px;background:#dfe2fd;border:1px solid #8c8c8c;border-top:2px solid #858085;border-bottom:2px solid #858085"></div>
<div class="t" style="left:54.500px;top:618px;font-size:11px;font-weight:bold;letter-spacing:.42px">Ventana de comando</div>
<svg style="left:1306.500px;top:616px" width="12" height="12" viewBox="0 0 12 12"><path d="M2 2l7.500 7.500M9.500 2l-7.500 7.500" stroke="#111" stroke-width="1.600"/></svg>
<div class="a" style="left:51px;top:635px;width:1273px;height:45px;background:#fff;border:1px solid #8c8c8c;border-top:none;overflow:hidden">
 <div class="t cl" style="left:3.800px;top:-5.200px">: ._MAINSELECTEspecificar esquina opuesta:</div>
 <div class="t cl" style="left:3.800px;top:10.300px">: ._MAINSELECTEspecificar esquina opuesta:</div>
 <div class="t cl" style="left:3.800px;top:25.800px">: ._MAINSELECT</div>
</div>
<div class="a" style="left:51px;top:680px;width:1273px;height:15.500px;background:#fff"></div>
<div class="t cl" style="left:55.200px;top:681.500px">:</div>
<!-- scrollbar -->
<div class="a" style="left:1308px;top:635px;width:15px;height:44px;background:#f4f4f4"></div>
<div class="a" style="left:1308px;top:654px;width:15px;height:8.500px;background:#cdcdcd"></div>
<svg style="left:1308px;top:634px" width="14" height="45" viewBox="0 0 14 45"><path d="M4 12.500l3.500-3.500 3.500 3.500" fill="none" stroke="#4a4a4a" stroke-width="2"/><path d="M4 33.500l3.500 3.500 3.500-3.500" fill="none" stroke="#4a4a4a" stroke-width="2"/></svg>
<!-- watermark -->
<svg style="left:938px;top:640px" width="50" height="54" viewBox="938 640 50 54">
 <path d="M965.500 650c6 4 7 12 1.500 17.500l17 15 1 6.500-6-1-16.500-17.500-4.500 1.500c5-5 9-12 7.500-22z" fill="#d3d7d3"/>
 <circle cx="951" cy="656.500" r="11.800" fill="#cdd1cd"/>
 <path d="M942 656a9 9 0 0 1 18 0z" fill="#fff"/>
 <path d="M946.500 666.500v19.500l1.500 2-1.500 2 4 3.500 5-5v-22z" fill="#cdd1cd"/>
 <path d="M952.500 669v17" stroke="#f4f4f4" stroke-width="1"/>
</svg>
<div class="t" style="left:992px;top:650.700px;font-size:19.500px;color:#c4c4c4;letter-spacing:.17px">Activar Windows</div>
<div class="t" style="left:992px;top:675.800px;font-size:14px;color:#cdcdcd;letter-spacing:.32px">Ir a Configuración de PC para activar Windows.</div>

<!-- ===== STATUS BAR ===== -->
<div class="a" style="left:0;top:697px;width:1354px;height:29px;background:#f0f0f0"></div>
<div class="a" style="left:0;top:726px;width:1354px;height:1px;background:#5a2348"></div>
<div class="t" style="left:-8px;top:706px;font-size:11.500px;letter-spacing:-.1px">DraftSight 2016 x64</div>
<div class="sb" style="left:448px;width:64px">Enganche</div>
<div class="sb" style="left:520px;width:42px">Rejilla</div>
<div class="sb" style="left:570px;width:42px">Ortog</div>
<div class="sb" style="left:622px;width:38px">Polar</div>
<div class="sb" style="left:667px;width:37px;background:#d6e8fb;border-color:#3a8ae0;box-shadow:none;line-height:19px">EngE</div>
<div class="sb" style="left:712px;width:56px">RastreoE</div>
<div class="sb" style="left:777px;width:88px;text-align:left;padding-left:4px">Anotación<i class="a" style="right:8px;top:6px;width:0;height:0;border-left:4px solid transparent;border-right:4px solid transparent;border-top:5px solid #111"></i></div>
<div class="t" style="left:875px;top:706px;font-size:11px">(2:1)</div>
<div class="t" style="left:904px;top:706px;font-size:11px;letter-spacing:-.05px">(-314.672,554.532,0)</div>
</body></html>
